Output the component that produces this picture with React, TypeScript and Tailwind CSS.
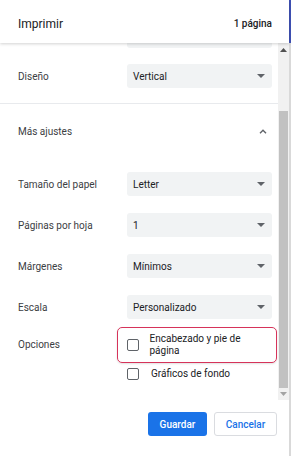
import React from "react";

const rows = [
  { label: "Tamaño del papel", value: "Letter" },
  { label: "Páginas por hoja", value: "1" },
  { label: "Márgenes", value: "Mínimos" },
  { label: "Escala", value: "Personalizado" },
];

function Caret() {
  return (
    <svg width="8" height="4" viewBox="0 0 8 4" className="text-[#5f6368]" aria-hidden>
      <path d="M0 0h8L4 4z" fill="currentColor" />
    </svg>
  );
}

function Select({ value }: { value: string }) {
  return (
    <div className="flex h-[24px] w-[145px] items-center justify-between rounded-[3px] bg-[#f1f3f4] pl-[6px] pr-[7px] text-[10px] text-[#202124]">
      <span>{value}</span>
      <Caret />
    </div>
  );
}

function Row({ label, value }: { label: string; value: string }) {
  return (
    <div className="flex items-center">
      <div className="w-[109px] text-[10px] text-[#3c4043]">{label}</div>
      <Select value={value} />
    </div>
  );
}

function Box() {
  return (
    <span className="block h-[12px] w-[12px] shrink-0 rounded-[2px] border-[1.5px] border-[#5f6368]" />
  );
}

function Scrollbar() {
  return (
    <div className="flex w-[11px] shrink-0 flex-col items-center bg-[#f1f1f1]">
      <div className="flex h-[14px] items-center justify-center">
        <svg width="7" height="4" viewBox="0 0 7 4" aria-hidden>
          <path d="M0 4h7L3.5 0z" fill="#505050" />
        </svg>
      </div>
      <div className="h-[54px]" />
      <div className="h-[277px] w-[9px] bg-[#c1c1c1]" />
      <div className="flex flex-1 items-center justify-center">
        <svg width="7" height="4" viewBox="0 0 7 4" aria-hidden>
          <path d="M0 0h7L3.5 4z" fill="#a3a3a3" />
        </svg>
      </div>
    </div>
  );
}

export default function App() {
  return (
    <div className="flex h-[456px] w-[291px] bg-white font-['Roboto',sans-serif]">
      <div className="flex w-[289px] flex-col">
        <header className="relative z-10 flex h-[43px] items-center justify-between pl-[18px] pr-[17px] pt-[4px] shadow-[0_1px_3px_rgba(0,0,0,0.18)]">
          <h1 className="text-[12px] text-[#202124]">Imprimir</h1>
          <span className="text-[10px] font-medium text-[#202124]">1 página</span>
        </header>

        <div className="flex h-[357px]">
          <div className="flex-1 overflow-hidden">
            <div className="ml-[127px] h-[5px] w-[145px] rounded-b-[3px] bg-[#f1f3f4]" />
            <div className="mt-[16px] pl-[18px]">
              <Row label="Diseño" value="Vertical" />
            </div>
            <div className="mt-[15px] h-px bg-[#e8eaed]" />
            <div className="flex h-[54px] items-center justify-between pl-[18px] pr-[11px]">
              <span className="text-[10px] text-[#3c4043]">Más ajustes</span>
              <svg width="8" height="5" viewBox="0 0 8 5" aria-hidden>
                <path d="M1 4.2L4 1.2l3 3" fill="none" stroke="#5f6368" strokeWidth="1.4" />
              </svg>
            </div>
            <div className="mt-[14px] flex flex-col gap-[17px] pl-[18px]">
              {rows.map((r) => (
                <Row key={r.label} label={r.label} value={r.value} />
              ))}
            </div>
            <div className="mt-[8px] flex pl-[18px]">
              <div className="w-[99px] pt-[10px] text-[10px] text-[#3c4043]">Opciones</div>
              <div className="flex flex-col">
                <div className="flex w-[160px] items-center gap-[11px] rounded-[5px] border-[1.5px] border-[#d6335a] py-[5px] pl-[8.5px] shadow-[0_1px_2px_rgba(0,0,0,0.12)]">
                  <Box />
                  <span className="text-[10px] leading-[12px] text-[#202124]">
                    Encabezado y pie de
                    <br />
                    página
                  </span>
                </div>
                <div className="mt-[3px] flex items-center gap-[12px] pl-[10px]">
                  <Box />
                  <span className="text-[10px] text-[#202124]">Gráficos de fondo</span>
                </div>
              </div>
            </div>
          </div>
          <Scrollbar />
        </div>

        <div className="flex flex-1 items-start justify-end gap-[7px] pr-[12px] pt-[12px]">
          <button className="h-[24px] w-[59px] rounded-[3px] bg-[#1a73e8] text-[10px] font-medium text-white">
            Guardar
          </button>
          <button className="h-[24px] w-[63px] rounded-[3px] border border-[#dadce0] bg-white text-[10px] font-medium text-[#1a73e8]">
            Cancelar
          </button>
        </div>
      </div>
      <div className="flex w-[2px] flex-col">
        <div className="h-[43px] bg-[#3f51b5]" />
        <div className="flex-1 bg-[#d9d9d9]" />
      </div>
    </div>
  );
}
